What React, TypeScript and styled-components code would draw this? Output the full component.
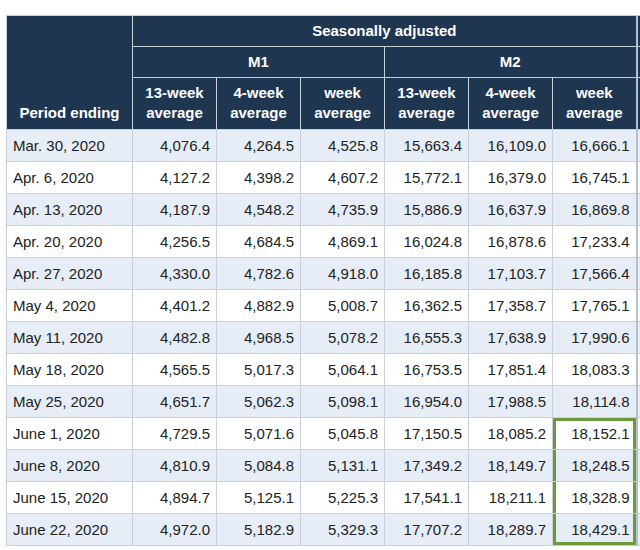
import {createGlobalStyle, styled} from "styled-components";

const GlobalStyle = createGlobalStyle`
  html, body {
    margin: 0;
    padding: 0;
    background: #ffffff;
    overflow: hidden;
  }
  body {
    font-family: "Liberation Sans", Arial, sans-serif;
  }
`;

const Page = styled.div`
  width: 640px;
  height: 550px;
  overflow: hidden;
  padding: 15px 0 0 6px;
  box-sizing: border-box;
`;

const Table = styled.table`
  border-collapse: collapse;
  table-layout: fixed;
  width: 714px;
  font-size: 15px;
  color: #222;
  border: 1px solid #c3ccd6;
`;

const Head = styled.th<{$h: number; $bottom?: boolean; $group?: boolean}>`
  background: #1f3651;
  color: #ffffff;
  font-weight: bold;
  text-align: center;
  vertical-align: ${(p) => (p.$bottom ? "bottom" : "middle")};
  height: ${(p) => p.$h}px;
  padding: 0 4px ${(p) => (p.$bottom ? "6px" : "0")};
  line-height: 20px;
  border: 1px solid #c6cfd8;
  border-right: ${(p) => (p.$group ? "2px solid #b7c1cc" : "1px solid #c6cfd8")};
  box-sizing: border-box;
`;

const Row = styled.tr<{$shade: boolean}>`
  background: ${(p) => (p.$shade ? "#e6edf6" : "#ffffff")};
`;

type Mark = "top" | "mid" | "bottom" | undefined;

const green = "#6b9a3d";

const shadowFor = (m: Mark) => {
  if (!m) return "none";
  const s = [`inset 3px 0 0 ${green}`, `inset -3px 0 0 ${green}`];
  if (m === "top") s.push(`inset 0 3px 0 ${green}`);
  if (m === "bottom") s.push(`inset 0 -3px 0 ${green}`);
  return s.join(", ");
};

const Cell = styled.td<{$date?: boolean; $mark?: Mark; $group?: boolean}>`
  height: 32px;
  box-sizing: border-box;
  padding: 0 ${(p) => (p.$date ? "4px" : "6px")} 0 6px;
  text-align: ${(p) => (p.$date ? "left" : "right")};
  border: 1px solid #c8d1db;
  border-right: ${(p) => (p.$group ? "2px solid #b7c1cc" : "1px solid #c8d1db")};
  box-shadow: ${(p) => shadowFor(p.$mark)};
  white-space: nowrap;
`;

const rows: [string, string[]][] = [
  ["Mar. 30, 2020", ["4,076.4", "4,264.5", "4,525.8", "15,663.4", "16,109.0", "16,666.1"]],
  ["Apr. 6, 2020", ["4,127.2", "4,398.2", "4,607.2", "15,772.1", "16,379.0", "16,745.1"]],
  ["Apr. 13, 2020", ["4,187.9", "4,548.2", "4,735.9", "15,886.9", "16,637.9", "16,869.8"]],
  ["Apr. 20, 2020", ["4,256.5", "4,684.5", "4,869.1", "16,024.8", "16,878.6", "17,233.4"]],
  ["Apr. 27, 2020", ["4,330.0", "4,782.6", "4,918.0", "16,185.8", "17,103.7", "17,566.4"]],
  ["May 4, 2020", ["4,401.2", "4,882.9", "5,008.7", "16,362.5", "17,358.7", "17,765.1"]],
  ["May 11, 2020", ["4,482.8", "4,968.5", "5,078.2", "16,555.3", "17,638.9", "17,990.6"]],
  ["May 18, 2020", ["4,565.5", "5,017.3", "5,064.1", "16,753.5", "17,851.4", "18,083.3"]],
  ["May 25, 2020", ["4,651.7", "5,062.3", "5,098.1", "16,954.0", "17,988.5", "18,114.8"]],
  ["June 1, 2020", ["4,729.5", "5,071.6", "5,045.8", "17,150.5", "18,085.2", "18,152.1"]],
  ["June 8, 2020", ["4,810.9", "5,084.8", "5,131.1", "17,349.2", "18,149.7", "18,248.5"]],
  ["June 15, 2020", ["4,894.7", "5,125.1", "5,225.3", "17,541.1", "18,211.1", "18,328.9"]],
  ["June 22, 2020", ["4,972.0", "5,182.9", "5,329.3", "17,707.2", "18,289.7", "18,429.1"]],
];

// last M2 column, last four weeks get the green box
const markFor = (idx: number): Mark => {
  if (idx === 9) return "top";
  if (idx === 12) return "bottom";
  if (idx > 9) return "mid";
  return undefined;
};

const subHeads = ["13-week", "4-week", "week"];

export default function App() {
  return (
    <Page>
      <GlobalStyle />
      <Table>
        <colgroup>
          <col style={{width: 126}} />
          {[0, 1, 2, 3, 4, 5, 6].map((i) => (
            <col key={i} style={{width: 84}} />
          ))}
        </colgroup>
        <thead>
          <tr>
            <Head $h={31} rowSpan={3} $bottom>
              Period ending
            </Head>
            <Head $h={31} colSpan={6} $group>
              Seasonally adjusted
            </Head>
            <Head $h={31} />
          </tr>
          <tr>
            <Head $h={31} colSpan={3}>
              M1
            </Head>
            <Head $h={31} colSpan={3} $group>
              M2
            </Head>
            <Head $h={31} />
          </tr>
          <tr>
            {[0, 1].flatMap((g) =>
              subHeads.map((s, i) => (
                <Head key={`${g}-${i}`} $h={52} $bottom $group={g === 1 && i === 2}>
                  {s}
                  <br />
                  average
                </Head>
              ))
            )}
            <Head $h={52} $bottom />
          </tr>
        </thead>
        <tbody>
          {rows.map(([date, vals], idx) => (
            <Row key={date} $shade={idx % 2 === 0}>
              <Cell $date>{date}</Cell>
              {vals.map((v, i) => (
                <Cell key={i} $group={i === 5} $mark={i === 5 ? markFor(idx) : undefined}>
                  {v}
                </Cell>
              ))}
              <Cell />
            </Row>
          ))}
        </tbody>
      </Table>
    </Page>
  );
}
